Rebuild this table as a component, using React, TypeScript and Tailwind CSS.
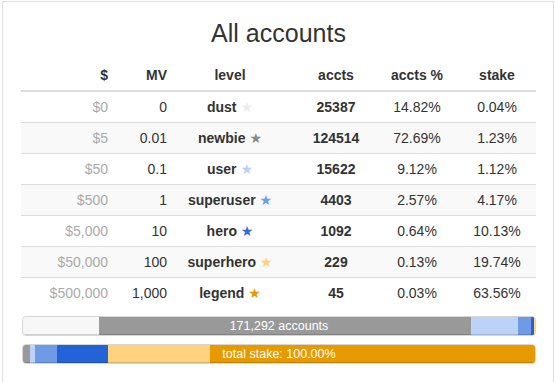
import React from 'react';

interface Level {
  usd: string;
  mv: string;
  name: string;
  star: string;
  accts: number;
  acctsPct: number;
  stakePct: number;
  bar: string;
}

const levels: Level[] = [
  { usd: '$0', mv: '0', name: 'dust', star: '#ececec', accts: 25387, acctsPct: 14.82, stakePct: 0.04, bar: '#f7f7f7' },
  { usd: '$5', mv: '0.01', name: 'newbie', star: '#8a8a8a', accts: 124514, acctsPct: 72.69, stakePct: 1.23, bar: '#999999' },
  { usd: '$50', mv: '0.1', name: 'user', star: '#b9d1f7', accts: 15622, acctsPct: 9.12, stakePct: 1.12, bar: '#bcd3f8' },
  { usd: '$500', mv: '1', name: 'superuser', star: '#6d9eeb', accts: 4403, acctsPct: 2.57, stakePct: 4.17, bar: '#6e9ae6' },
  { usd: '$5,000', mv: '10', name: 'hero', star: '#2a6ee6', accts: 1092, acctsPct: 0.64, stakePct: 10.13, bar: '#2462d8' },
  { usd: '$50,000', mv: '100', name: 'superhero', star: '#ffd27f', accts: 229, acctsPct: 0.13, stakePct: 19.74, bar: '#ffd280' },
  { usd: '$500,000', mv: '1,000', name: 'legend', star: '#e69a00', accts: 45, acctsPct: 0.03, stakePct: 63.56, bar: '#e69a00' },
];

function ProgressBar({ label, field }: { label: string; field: 'acctsPct' | 'stakePct' }) {
  return (
    <div className="relative flex h-[20px] w-[514px] overflow-hidden rounded-[4px] border border-[#d6d6d6] bg-[#f5f5f5] shadow-[inset_0_1px_2px_rgba(0,0,0,0.1)]">
      {levels.map((l) => (
        <div
          key={l.name}
          className="h-full shrink-0 shadow-[inset_0_-1px_0_rgba(0,0,0,0.15)]"
          style={{ width: `${l[field]}%`, backgroundColor: l.bar }}
        />
      ))}
      <span className="absolute inset-0 text-center text-[12.5px] leading-[18px] text-white">{label}</span>
    </div>
  );
}

export default function App() {
  return (
    <div className="min-h-[382px] bg-white font-['Liberation_Sans',Arial,sans-serif] text-[#333]">
      <div className="ml-[2px] mt-[1px] h-[400px] w-[552px] border border-[#e2dde2] pl-[18px] pt-[17px]">
        <h2 className="w-[515px] text-center text-[25px] leading-[28px] text-[#333]">All accounts</h2>

        <table className="mt-[12px] w-[515px] table-fixed text-[14px] leading-[20px]">
          <colgroup>
            <col className="w-[94px]" />
            <col className="w-[57px]" />
            <col className="w-[116px]" />
            <col className="w-[96px]" />
            <col className="w-[66px]" />
            <col className="w-[86px]" />
          </colgroup>
          <thead>
            <tr className="font-bold">
              <th className="h-[32px] border-b-2 border-[#ddd] py-[5px] pl-[5px] pr-[7px] text-right">$</th>
              <th className="border-b-2 border-[#ddd] px-[5px] py-[5px] text-right">MV</th>
              <th className="border-b-2 border-[#ddd] px-[5px] py-[5px] text-center">level</th>
              <th className="border-b-2 border-[#ddd] px-[5px] py-[5px] text-center">accts</th>
              <th className="border-b-2 border-[#ddd] px-[5px] py-[5px] text-center">accts %</th>
              <th className="border-b-2 border-[#ddd] py-[5px] pl-[8px] text-center">stake</th>
            </tr>
          </thead>
          <tbody>
            {levels.map((l, i) => (
              <tr key={l.name} className={i % 2 === 1 ? 'bg-[#f9f9f9]' : ''}>
                <td className={`${i > 0 ? 'border-t border-[#ddd]' : ''} py-[5px] pl-[5px] pr-[7px] text-right text-[#aaa]`}>{l.usd}</td>
                <td className={`${i > 0 ? 'border-t border-[#ddd]' : ''} px-[5px] py-[5px] text-right`}>{l.mv}</td>
                <td className={`${i > 0 ? 'border-t border-[#ddd]' : ''} whitespace-nowrap px-[5px] py-[5px] text-center font-bold`}>
                  {l.name}{' '}
                  <span className="font-['DejaVu_Sans'] text-[14px] leading-none font-normal" style={{ color: l.star }}>★</span>
                </td>
                <td className={`${i > 0 ? 'border-t border-[#ddd]' : ''} px-[5px] py-[5px] text-center font-bold`}>{l.accts}</td>
                <td className={`${i > 0 ? 'border-t border-[#ddd]' : ''} px-[5px] py-[5px] text-center`}>{l.acctsPct.toFixed(2)}%</td>
                <td className={`${i > 0 ? 'border-t border-[#ddd]' : ''} py-[5px] pl-[8px] text-center`}>{l.stakePct.toFixed(2)}%</td>
              </tr>
            ))}
          </tbody>
        </table>

        <div className="mt-[8px] flex flex-col gap-[8px] pl-[1px]">
          <ProgressBar label="171,292 accounts" field="acctsPct" />
          <ProgressBar label="total stake: 100.00%" field="stakePct" />
        </div>
      </div>
    </div>
  );
}
